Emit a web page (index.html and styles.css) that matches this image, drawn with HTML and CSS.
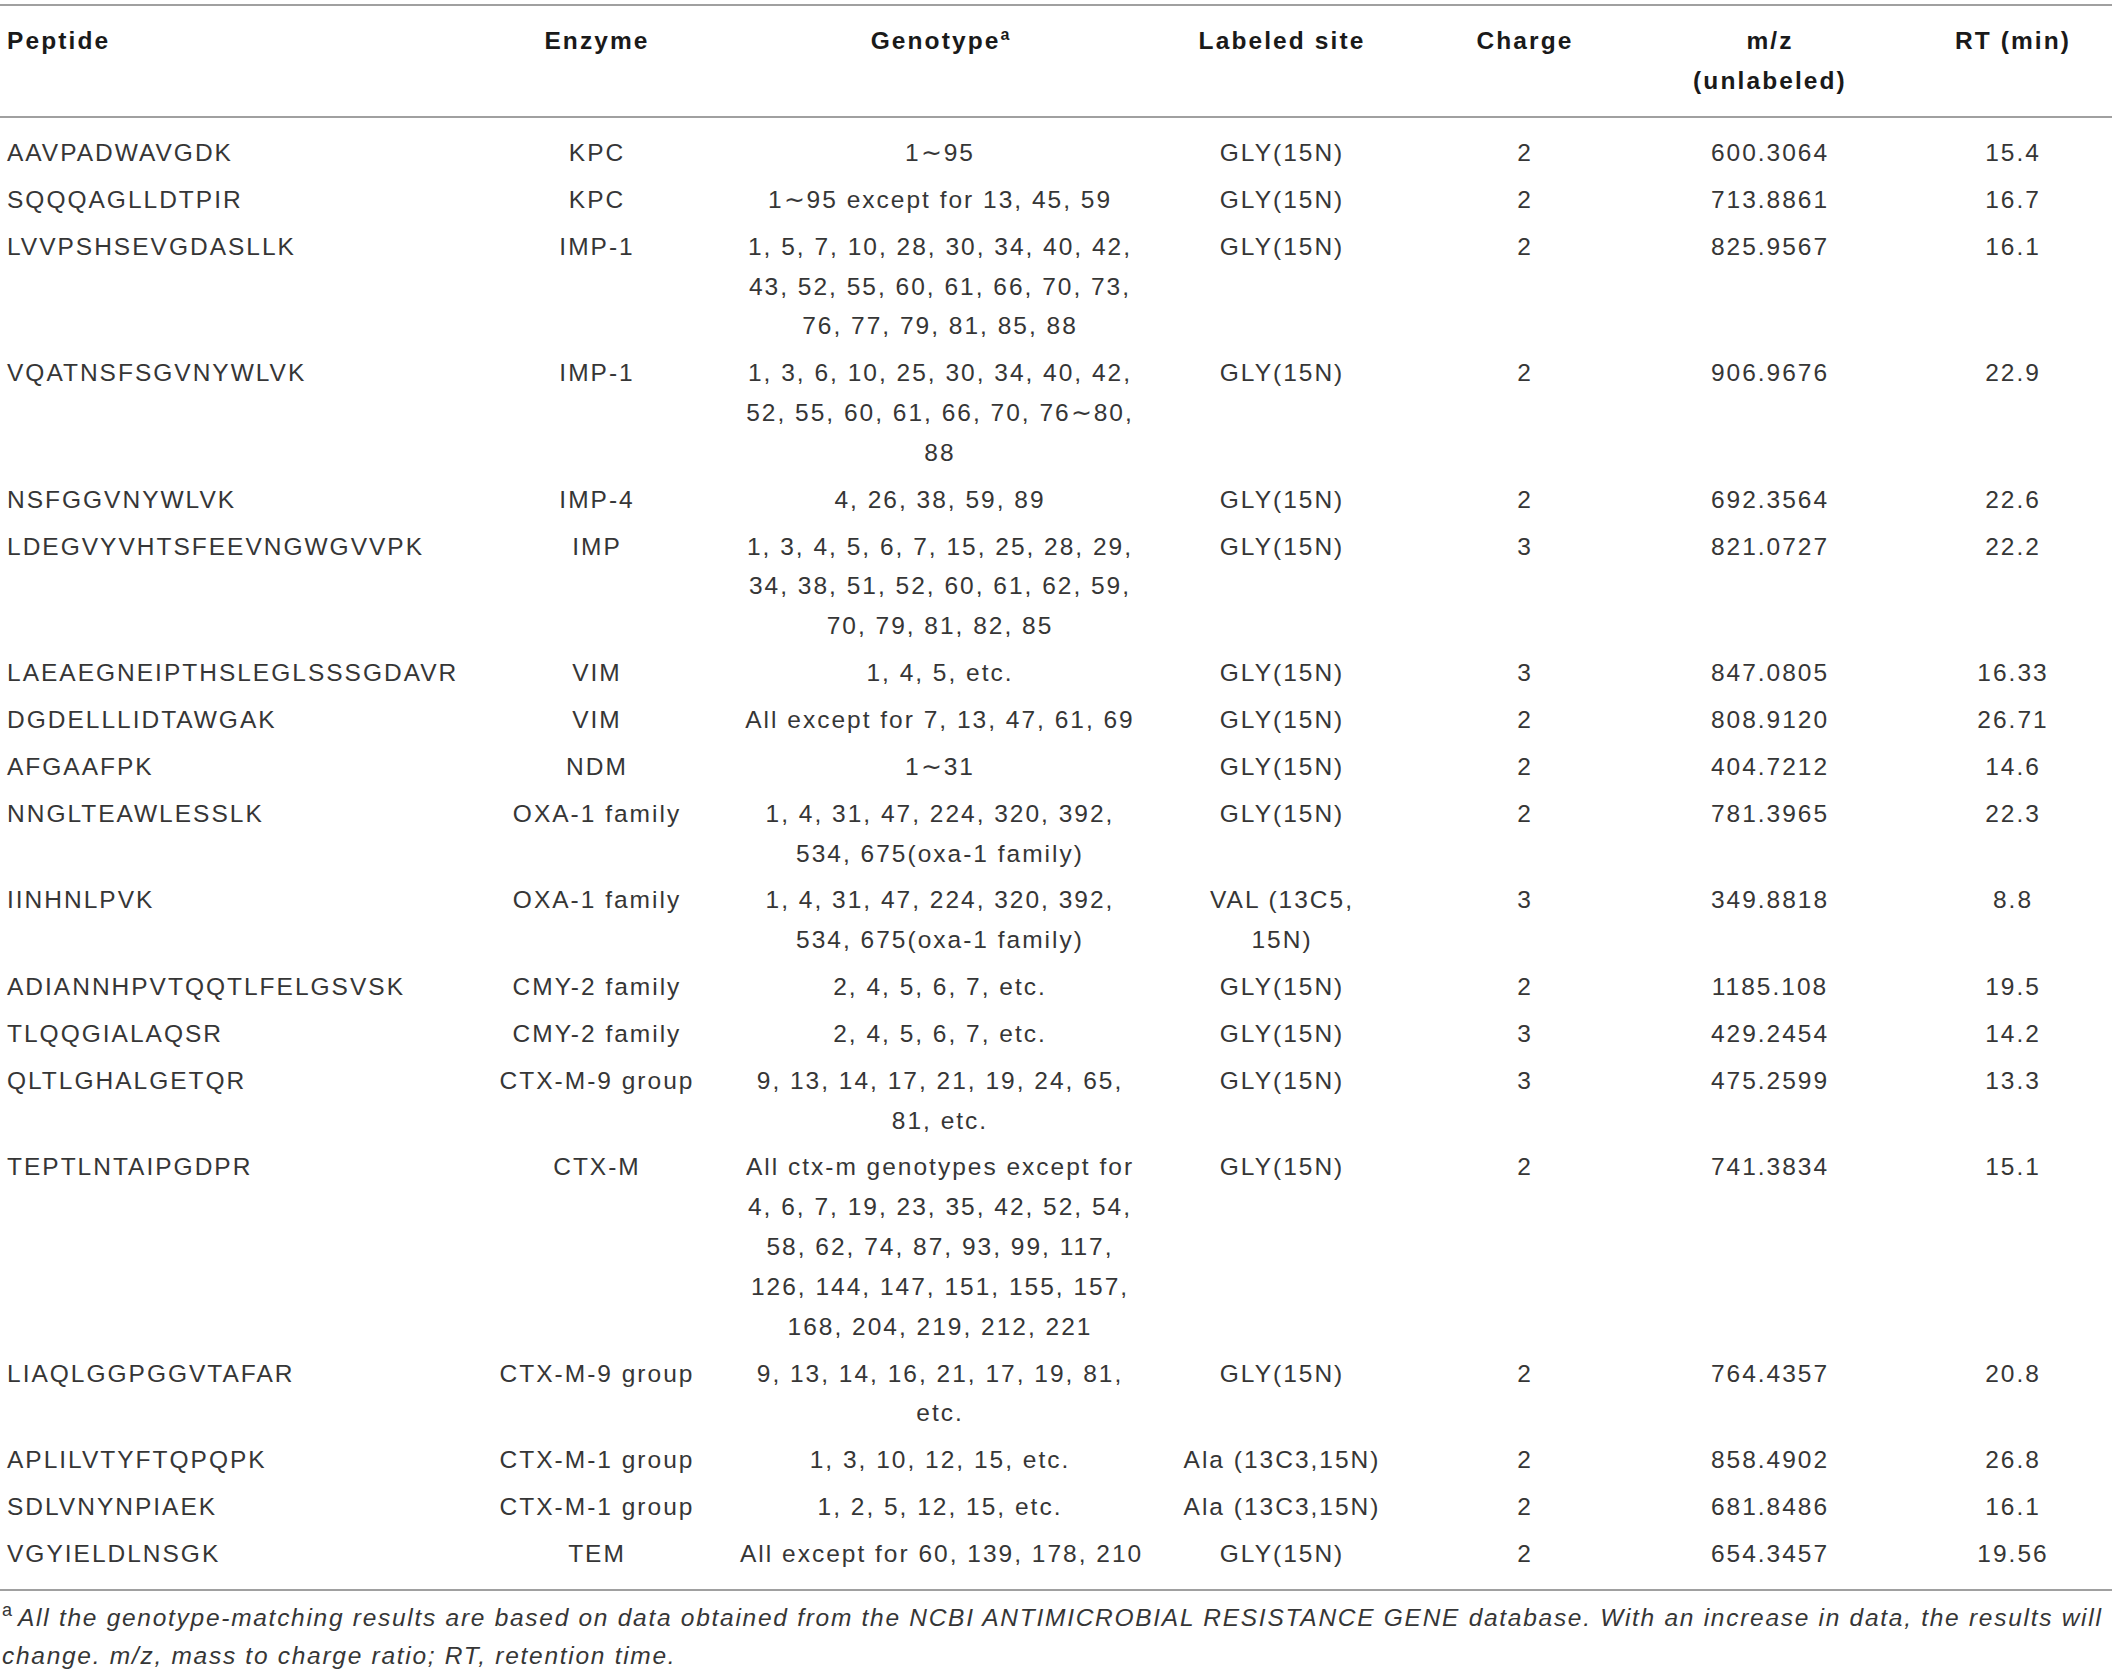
FILE: index.html
```html
<!DOCTYPE html>
<html lang="en">
<head>
<meta charset="utf-8">
<title>Peptide table</title>
<link rel="stylesheet" href="styles.css">
</head>
<body>
<div class="page">
<table class="tbl">
  <colgroup>
    <col class="c-pep"><col class="c-enz"><col class="c-geno"><col class="c-lab"><col class="c-chg"><col class="c-mz"><col class="c-rt">
  </colgroup>
  <thead>
    <tr>
      <th class="left">Peptide</th>
      <th>Enzyme</th>
      <th>Genotype<sup class="sup">a</sup></th>
      <th>Labeled site</th>
      <th>Charge</th>
      <th>m/z<br>(unlabeled)</th>
      <th>RT (min)</th>
    </tr>
  </thead>
  <tbody>
    <tr><td class="left">AAVPADWAVGDK</td><td>KPC</td><td>1∼95</td><td>GLY(15N)</td><td>2</td><td>600.3064</td><td>15.4</td></tr>
    <tr><td class="left">SQQQAGLLDTPIR</td><td>KPC</td><td>1∼95 except for 13, 45, 59</td><td>GLY(15N)</td><td>2</td><td>713.8861</td><td>16.7</td></tr>
    <tr><td class="left">LVVPSHSEVGDASLLK</td><td>IMP-1</td><td>1, 5, 7, 10, 28, 30, 34, 40, 42,<br>43, 52, 55, 60, 61, 66, 70, 73,<br>76, 77, 79, 81, 85, 88</td><td>GLY(15N)</td><td>2</td><td>825.9567</td><td>16.1</td></tr>
    <tr><td class="left">VQATNSFSGVNYWLVK</td><td>IMP-1</td><td>1, 3, 6, 10, 25, 30, 34, 40, 42,<br>52, 55, 60, 61, 66, 70, 76∼80,<br>88</td><td>GLY(15N)</td><td>2</td><td>906.9676</td><td>22.9</td></tr>
    <tr><td class="left">NSFGGVNYWLVK</td><td>IMP-4</td><td>4, 26, 38, 59, 89</td><td>GLY(15N)</td><td>2</td><td>692.3564</td><td>22.6</td></tr>
    <tr><td class="left">LDEGVYVHTSFEEVNGWGVVPK</td><td>IMP</td><td>1, 3, 4, 5, 6, 7, 15, 25, 28, 29,<br>34, 38, 51, 52, 60, 61, 62, 59,<br>70, 79, 81, 82, 85</td><td>GLY(15N)</td><td>3</td><td>821.0727</td><td>22.2</td></tr>
    <tr><td class="left">LAEAEGNEIPTHSLEGLSSSGDAVR</td><td>VIM</td><td>1, 4, 5, etc.</td><td>GLY(15N)</td><td>3</td><td>847.0805</td><td>16.33</td></tr>
    <tr><td class="left">DGDELLLIDTAWGAK</td><td>VIM</td><td>All except for 7, 13, 47, 61, 69</td><td>GLY(15N)</td><td>2</td><td>808.9120</td><td>26.71</td></tr>
    <tr><td class="left">AFGAAFPK</td><td>NDM</td><td>1∼31</td><td>GLY(15N)</td><td>2</td><td>404.7212</td><td>14.6</td></tr>
    <tr><td class="left">NNGLTEAWLESSLK</td><td>OXA-1 family</td><td>1, 4, 31, 47, 224, 320, 392,<br>534, 675(oxa-1 family)</td><td>GLY(15N)</td><td>2</td><td>781.3965</td><td>22.3</td></tr>
    <tr><td class="left">IINHNLPVK</td><td>OXA-1 family</td><td>1, 4, 31, 47, 224, 320, 392,<br>534, 675(oxa-1 family)</td><td>VAL (13C5,<br>15N)</td><td>3</td><td>349.8818</td><td>8.8</td></tr>
    <tr><td class="left">ADIANNHPVTQQTLFELGSVSK</td><td>CMY-2 family</td><td>2, 4, 5, 6, 7, etc.</td><td>GLY(15N)</td><td>2</td><td>1185.108</td><td>19.5</td></tr>
    <tr><td class="left">TLQQGIALAQSR</td><td>CMY-2 family</td><td>2, 4, 5, 6, 7, etc.</td><td>GLY(15N)</td><td>3</td><td>429.2454</td><td>14.2</td></tr>
    <tr><td class="left">QLTLGHALGETQR</td><td>CTX-M-9 group</td><td>9, 13, 14, 17, 21, 19, 24, 65,<br>81, etc.</td><td>GLY(15N)</td><td>3</td><td>475.2599</td><td>13.3</td></tr>
    <tr><td class="left">TEPTLNTAIPGDPR</td><td>CTX-M</td><td>All ctx-m genotypes except for<br>4, 6, 7, 19, 23, 35, 42, 52, 54,<br>58, 62, 74, 87, 93, 99, 117,<br>126, 144, 147, 151, 155, 157,<br>168, 204, 219, 212, 221</td><td>GLY(15N)</td><td>2</td><td>741.3834</td><td>15.1</td></tr>
    <tr><td class="left">LIAQLGGPGGVTAFAR</td><td>CTX-M-9 group</td><td>9, 13, 14, 16, 21, 17, 19, 81,<br>etc.</td><td>GLY(15N)</td><td>2</td><td>764.4357</td><td>20.8</td></tr>
    <tr><td class="left">APLILVTYFTQPQPK</td><td>CTX-M-1 group</td><td>1, 3, 10, 12, 15, etc.</td><td>Ala (13C3,15N)</td><td>2</td><td>858.4902</td><td>26.8</td></tr>
    <tr><td class="left">SDLVNYNPIAEK</td><td>CTX-M-1 group</td><td>1, 2, 5, 12, 15, etc.</td><td>Ala (13C3,15N)</td><td>2</td><td>681.8486</td><td>16.1</td></tr>
    <tr><td class="left">VGYIELDLNSGK</td><td>TEM</td><td>All except for 60, 139, 178, 210</td><td>GLY(15N)</td><td>2</td><td>654.3457</td><td>19.56</td></tr>
  </tbody>
</table>
<p class="note"><sup class="note-sup">a</sup><em>All the genotype-matching results are based on data obtained from the NCBI ANTIMICROBIAL RESISTANCE GENE database. With an increase in data, the results will change. m/z, mass to charge ratio; RT, retention time.</em></p>
</div>
</body>
</html>
```
FILE: styles.css
```css
html, body {
  margin: 0;
  padding: 0;
  background: #ffffff;
}

.page {
  padding-top: 4px;
  width: 2112px;
  font-family: "Liberation Sans", Arial, sans-serif;
  font-size: 24.5px;
  letter-spacing: 2px;
  color: #363636;
}

.tbl {
  width: 2112px;
  table-layout: fixed;
  border-collapse: collapse;
}

.c-pep { width: 454px; }
.c-enz { width: 286px; }
.c-geno { width: 400px; }
.c-lab { width: 284px; }
.c-chg { width: 202px; }
.c-mz { width: 288px; }
.c-rt { width: 198px; }

.tbl thead tr {
  border-top: 2px solid #a0a0a0;
  border-bottom: 2px solid #a0a0a0;
}

.tbl th {
  font-weight: bold;
  color: #1a1a1a;
  letter-spacing: 2.1px;
  line-height: 40px;
  padding: 15px 0 15px;
  text-align: center;
  vertical-align: top;
  white-space: nowrap;
}

.tbl td {
  line-height: 39.85px;
  padding: 3px 0 4px;
  text-align: center;
  vertical-align: top;
  white-space: nowrap;
  font-weight: normal;
}

.tbl .left {
  text-align: left;
  padding-left: 7px;
}

.tbl tbody tr:first-child td {
  padding-top: 15px;
}

.tbl tbody tr:last-child td {
  padding-bottom: 15px;
}

.tbl tbody tr:last-child {
  border-bottom: 2px solid #a0a0a0;
}

.sup {
  font-size: 16px;
  line-height: 0;
  vertical-align: 9px;
  letter-spacing: 0;
}

.note {
  margin: 8px 0 0;
  padding-left: 2px;
  line-height: 38px;
  font-size: 24.5px;
  letter-spacing: 1.72px;
}

.note em {
  font-style: italic;
}

.note-sup {
  display: inline-block;
  font-size: 18px;
  line-height: 18px;
  vertical-align: top;
  margin-top: 2px;
  letter-spacing: 0;
  margin-right: 6px;
}
```
